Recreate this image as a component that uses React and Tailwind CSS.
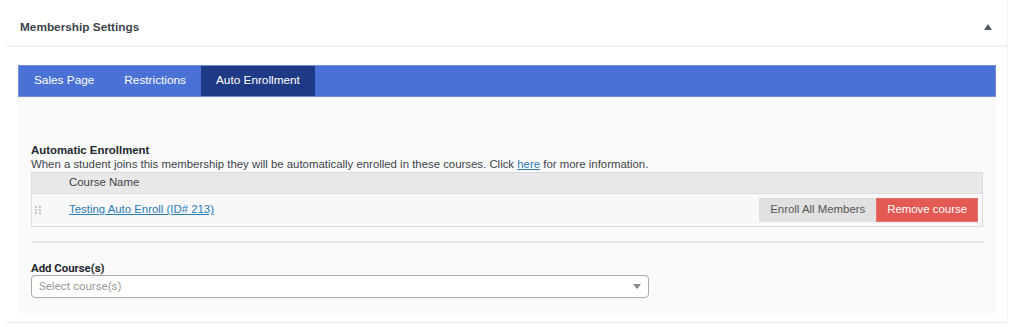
import React from 'react';

const tabs = ['Sales Page', 'Restrictions', 'Auto Enrollment'];

const DragHandle = () => (
    <svg width="6" height="8" viewBox="0 0 6 8" className="ml-[1px]">
        {[1, 4, 7].map((y) => (
            <g key={y}>
                <circle cx="1" cy={y} r="1" fill="#b4b4b4" />
                <circle cx="5" cy={y} r="1" fill="#b4b4b4" />
            </g>
        ))}
    </svg>
);

const App = () => {
    return (
        <div className="w-[1024px] h-[327px] bg-white pl-[6px] pr-[16px]" style={{ fontFamily: '"Liberation Sans", Arial, sans-serif' }}>
            <div className="border-r border-[#f3f3f3] border-b border-b-[#ececec] h-[323px]">
                {/* header */}
                <div className="h-[47px] flex items-center justify-between pt-[10px] pl-[14px] pr-[15px] border-b-2 border-[#f1f1f1]">
                    <h2 className="text-[11.8px] font-bold text-[#3c434a]">Membership Settings</h2>
                    <svg width="8" height="6" viewBox="0 0 8 6" className="mb-[2px]">
                        <path d="M4 0 L8 6 L0 6 Z" fill="#50575e" />
                    </svg>
                </div>

                <div className="pl-[12px] pt-[18px] pr-[11px]">
                    {/* tabs */}
                    <div className="flex h-[32px] bg-[#4a72d6] border border-[#6f8fe0]">
                        {tabs.map((tab, i) => (
                            <div
                                key={tab}
                                className={`px-[15px] flex items-center text-[11.8px] text-white ${i === 2 ? 'bg-[#1f3a85]' : ''}`}
                            >
                                {tab}
                            </div>
                        ))}
                    </div>

                    {/* panel */}
                    <div className="bg-[#fafafa] px-[13px] pt-[46px] pb-[14px] h-[216px]">
                        <h3 className="text-[11.4px] font-bold text-[#23282d] leading-[14px]">Automatic Enrollment</h3>
                        <p className="text-[11.4px] text-[#3c434a] leading-[14px]">
                            When a student joins this membership they will be automatically enrolled in these courses. Click{' '}
                            <a href="#" className="text-[#2b7bb9] underline">here</a> for more information.
                        </p>
                        <div className="border border-[#dcdcdc] mt-[1px]">
                            <div className="h-[21px] bg-[#e8e8e8] border-b border-[#dcdcdc] flex items-center pl-[37px] text-[11.4px] text-[#3c434a]">
                                Course Name
                            </div>
                            <div className="h-[32px] bg-[#f8f8f8] flex items-center pl-[2px] pr-[4px]">
                                <div className="w-[35px]">
                                    <DragHandle />
                                </div>
                                <a href="#" className="text-[11.4px] text-[#2b7bb9] underline">Testing Auto Enroll (ID# 213)</a>
                                <div className="ml-auto flex">
                                    <button className="h-[24px] px-[11px] bg-[#e1e1e1] text-[11.4px] text-[#555]">Enroll All Members</button>
                                    <button className="h-[24px] px-[10px] bg-[#e35a55] text-[11.4px] text-white border border-[#e86f6a]">Remove course</button>
                                </div>
                            </div>
                        </div>

                        <div className="h-[2px] bg-[#e6e6e6] mt-[14px]"></div>

                        <h3 className="text-[11.4px] font-bold text-[#23282d] leading-[14px] mt-[18px]" style={{ fontFamily: 'Roboto, "Liberation Sans", sans-serif' }}>Add Course(s)</h3>
                        <div className="w-[618px] h-[23px] border border-[#aaa] rounded-[4px] bg-white flex items-center justify-between px-[7px]">
                            <span className="text-[11.4px] text-[#999]" style={{ fontFamily: 'Roboto, "Liberation Sans", sans-serif' }}>Select course(s)</span>
                            <svg width="8" height="5" viewBox="0 0 8 5">
                                <path d="M0 0 L8 0 L4 5 Z" fill="#888" />
                            </svg>
                        </div>
                    </div>
                </div>
            </div>
        </div>
    );
};

export default App;
